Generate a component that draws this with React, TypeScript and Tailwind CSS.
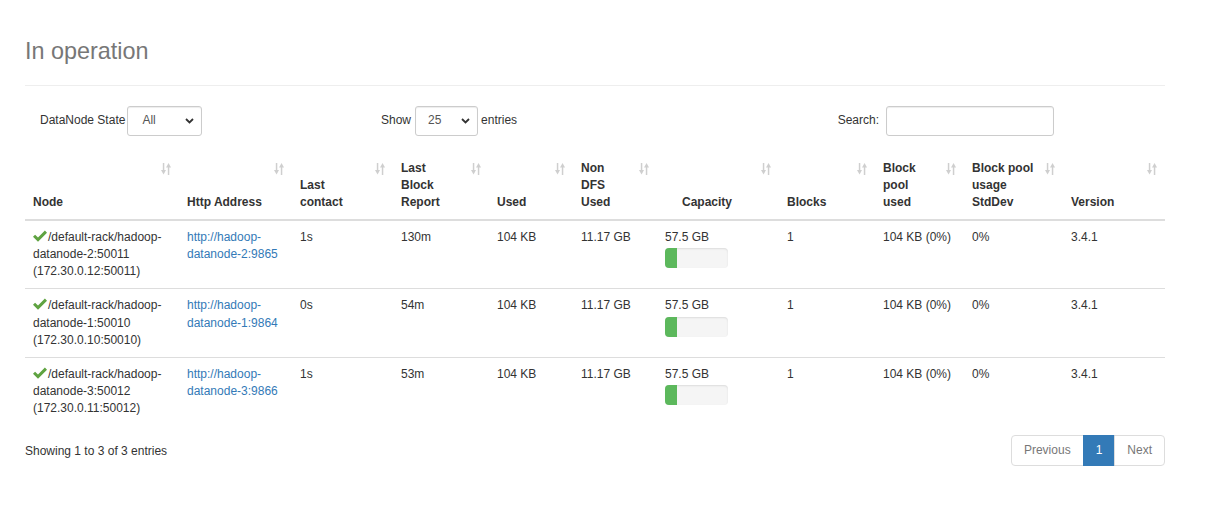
import React from "react";

type NodeRow = {
  rackLine: string;
  hostLine: string;
  ipLine: string;
  httpLine1: string;
  httpLine2: string;
  lastContact: string;
  lastBlockReport: string;
  used: string;
  nonDfsUsed: string;
  capacity: string;
  blocks: string;
  blockPoolUsed: string;
  stdDev: string;
  version: string;
};

const rows: NodeRow[] = [
  {
    rackLine: "/default-rack/hadoop-",
    hostLine: "datanode-2:50011",
    ipLine: "(172.30.0.12:50011)",
    httpLine1: "http://hadoop-",
    httpLine2: "datanode-2:9865",
    lastContact: "1s",
    lastBlockReport: "130m",
    used: "104 KB",
    nonDfsUsed: "11.17 GB",
    capacity: "57.5 GB",
    blocks: "1",
    blockPoolUsed: "104 KB (0%)",
    stdDev: "0%",
    version: "3.4.1",
  },
  {
    rackLine: "/default-rack/hadoop-",
    hostLine: "datanode-1:50010",
    ipLine: "(172.30.0.10:50010)",
    httpLine1: "http://hadoop-",
    httpLine2: "datanode-1:9864",
    lastContact: "0s",
    lastBlockReport: "54m",
    used: "104 KB",
    nonDfsUsed: "11.17 GB",
    capacity: "57.5 GB",
    blocks: "1",
    blockPoolUsed: "104 KB (0%)",
    stdDev: "0%",
    version: "3.4.1",
  },
  {
    rackLine: "/default-rack/hadoop-",
    hostLine: "datanode-3:50012",
    ipLine: "(172.30.0.11:50012)",
    httpLine1: "http://hadoop-",
    httpLine2: "datanode-3:9866",
    lastContact: "1s",
    lastBlockReport: "53m",
    used: "104 KB",
    nonDfsUsed: "11.17 GB",
    capacity: "57.5 GB",
    blocks: "1",
    blockPoolUsed: "104 KB (0%)",
    stdDev: "0%",
    version: "3.4.1",
  },
];

const columns: { lines: string[]; width: string; center?: boolean }[] = [
  { lines: ["Node"], width: "w-[154px]" },
  { lines: ["Http Address"], width: "w-[113px]" },
  { lines: ["Last", "contact"], width: "w-[101px]" },
  { lines: ["Last", "Block", "Report"], width: "w-[96px]" },
  { lines: ["Used"], width: "w-[84px]" },
  { lines: ["Non", "DFS", "Used"], width: "w-[84px]" },
  { lines: ["Capacity"], width: "w-[122px]", center: true },
  { lines: ["Blocks"], width: "w-[96px]" },
  { lines: ["Block", "pool", "used"], width: "w-[89px]" },
  { lines: ["Block pool", "usage", "StdDev"], width: "w-[99px]" },
  { lines: ["Version"], width: "w-[102px]" },
];

const SortIcon = () => (
  <svg width="10" height="12" viewBox="0 0 10 12" className="absolute right-[8px] top-[11px]">
    <rect x="1.8" y="0" width="1.5" height="8" fill="#cfcfcf" />
    <polygon points="0,7 5,7 2.55,11.5" fill="#cfcfcf" />
    <rect x="6.8" y="4" width="1.5" height="8" fill="#cfcfcf" />
    <polygon points="5,4.5 10,4.5 7.55,0" fill="#cfcfcf" />
  </svg>
);

const CheckIcon = () => (
  <svg width="14" height="12" viewBox="0 0 14 12" className="mr-[1px] inline-block align-[-1px]">
    <polygon points="0,6.8 2.1,4.7 5,7.5 11.9,0.6 14,2.7 5,11.7" fill="#5fa341" />
  </svg>
);

const Chevron = () => (
  <svg width="9" height="6" viewBox="0 0 9 6" className="pointer-events-none absolute right-[8px] top-[12px]">
    <polyline points="1,1 4.5,4.5 8,1" fill="none" stroke="#333" strokeWidth="1.8" />
  </svg>
);

const App: React.FC = () => {
  return (
    <div className="min-h-[506px] bg-white font-['Liberation_Sans',Arial,sans-serif] text-[12px] leading-[17.14px] text-[#333]">
      <div className="ml-[25px] w-[1140px]">
        <div className="border-b border-[#eee] pb-[13px] pt-[27px]">
          <h1 className="text-[36px] font-normal leading-[39.6px]">
            <span className="text-[23.4px] text-[#777]">In operation</span>
          </h1>
        </div>

        <div className="mt-[20px] flex h-[30px] items-center">
          <div className="flex w-[356px] items-center pl-[15px]">
            <span className="mr-[2px]">DataNode State</span>
            <div className="relative">
              <select className="h-[30px] w-[75px] appearance-none rounded-[3px] border border-[#ccc] bg-white pl-[14px] text-[12px] text-[#555] shadow-[inset_0_1px_1px_rgba(0,0,0,0.075)]">
                <option>All</option>
              </select>
              <Chevron />
            </div>
          </div>
          <div className="flex items-center">
            <span className="mr-[4px]">Show</span>
            <div className="relative">
              <select className="h-[30px] w-[63px] appearance-none rounded-[3px] border border-[#ccc] bg-white pl-[12px] text-[12px] text-[#555] shadow-[inset_0_1px_1px_rgba(0,0,0,0.075)]">
                <option>25</option>
              </select>
              <Chevron />
            </div>
            <span className="ml-[3px]">entries</span>
          </div>
          <div className="flex flex-1 items-center justify-end pr-[111px]">
            <span className="mr-[7px]">Search:</span>
            <input
              type="text"
              className="h-[30px] w-[168px] rounded-[3px] border border-[#ccc] bg-white px-[10px] text-[12px] shadow-[inset_0_1px_1px_rgba(0,0,0,0.075)] outline-none"
            />
          </div>
        </div>

        <table className="mt-[16px] w-[1140px] table-fixed border-collapse">
          <colgroup>
            {columns.map((col, i) => (
              <col key={i} className={col.width} />
            ))}
          </colgroup>
          <thead>
            <tr className="border-b-2 border-[#ddd]">
              {columns.map((col, i) => (
                <th
                  key={i}
                  className={`relative whitespace-nowrap py-[8px] pl-[8px] pr-[30px] align-bottom font-bold ${
                    col.center ? "text-center" : "text-left"
                  }`}
                >
                  {col.lines.map((line, j) => (
                    <div key={j}>{line}</div>
                  ))}
                  <SortIcon />
                </th>
              ))}
            </tr>
          </thead>
          <tbody>
            {rows.map((row, i) => (
              <tr key={i} className={i > 0 ? "border-t border-[#ddd]" : ""}>
                <td className="whitespace-nowrap p-[8px] align-top">
                  <div>
                    <CheckIcon />
                    {row.rackLine}
                  </div>
                  <div>{row.hostLine}</div>
                  <div>{row.ipLine}</div>
                </td>
                <td className="whitespace-nowrap p-[8px] align-top">
                  <a href="#" className="text-[#337ab7]">
                    {row.httpLine1}
                    <br />
                    {row.httpLine2}
                  </a>
                </td>
                <td className="p-[8px] align-top">{row.lastContact}</td>
                <td className="p-[8px] align-top">{row.lastBlockReport}</td>
                <td className="p-[8px] align-top">{row.used}</td>
                <td className="p-[8px] align-top">{row.nonDfsUsed}</td>
                <td className="p-[8px] align-top">
                  <div>{row.capacity}</div>
                  <div className="mt-[2px] h-[20px] w-[63px] overflow-hidden rounded-[4px] bg-[#f5f5f5] shadow-[inset_0_1px_2px_rgba(0,0,0,0.1)]">
                    <div className="h-full w-[19%] bg-[#5cb85c]" />
                  </div>
                </td>
                <td className="p-[8px] align-top">{row.blocks}</td>
                <td className="p-[8px] align-top">{row.blockPoolUsed}</td>
                <td className="p-[8px] align-top">{row.stdDev}</td>
                <td className="p-[8px] align-top">{row.version}</td>
              </tr>
            ))}
          </tbody>
        </table>

        <div className="mt-[10px] flex items-center justify-between">
          <div className="pt-[1px]">Showing 1 to 3 of 3 entries</div>
          <div className="flex">
            <span className="rounded-l-[4px] border border-[#ddd] bg-white px-[12px] py-[6px] text-[#777]">Previous</span>
            <span className="-ml-px border border-[#337ab7] bg-[#337ab7] px-[12px] py-[6px] text-white">1</span>
            <span className="-ml-px rounded-r-[4px] border border-[#ddd] bg-white px-[12px] py-[6px] text-[#777]">Next</span>
          </div>
        </div>
      </div>
    </div>
  );
};

export default App;
